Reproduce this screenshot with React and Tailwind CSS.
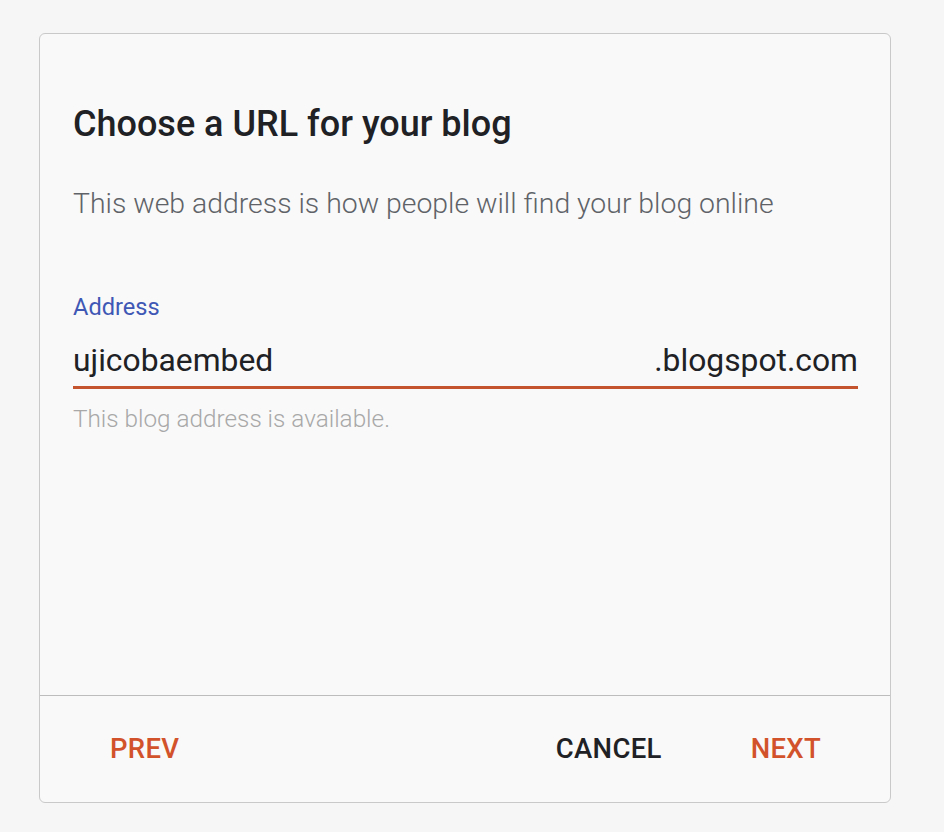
import React from 'react';

// ─── Footer Button ─────────────────────────────────────────────────
const FlatButton = ({ children, tone = 'accent' }) => (
  <button
    type="button"
    className={
      tone === 'accent'
        ? 'text-[27.5px] leading-none font-medium tracking-[0.3px] text-[#d2532b]'
        : 'text-[27.5px] leading-none font-medium tracking-[0.3px] text-[#202124]'
    }
  >
    {children}
  </button>
);

const App = () => {
  return (
    <div
      className="min-h-screen w-[944px] h-[832px] bg-[#f6f6f6] pt-[33px] pl-[39px]"
      style={{ fontFamily: 'Roboto, "Noto Sans", sans-serif' }}
    >
      <div className="w-[852px] h-[770px] bg-[#f9f9f9] border border-[#c9c9c9] rounded-[6px] flex flex-col">
        {/* Body */}
        <div className="flex-1 px-[33px] pt-[70px]">
          <h1 className="text-[36px] leading-[40px] font-medium text-[#202124]">
            Choose a URL for your blog
          </h1>
          <p className="mt-[44px] text-[28.4px] leading-[32px] font-light text-[#5f6368]">
            This web address is how people will find your blog online
          </p>

          <div className="mt-[74px]">
            <label className="block text-[23.6px] leading-[26px] text-[#3f58b5]">Address</label>
            <div className="mt-[22px] flex items-end justify-between border-b-[3px] border-[#c4542d] pb-[8px] mr-[-1px]">
              <span className="text-[31.8px] leading-[36px] text-[#202124]">ujicobaembed</span>
              <span className="text-[31.8px] leading-[36px] text-[#202124]">.blogspot.com</span>
            </div>
            <p className="mt-[17px] text-[24.3px] leading-[26px] font-light text-[#a8a8a8]">
              This blog address is available.
            </p>
          </div>
        </div>

        {/* Footer */}
        <div className="h-[107px] border-t border-[#bdbdbd] flex items-center pl-[70px] pr-[69px]">
          <FlatButton>PREV</FlatButton>
          <div className="flex-1" />
          <FlatButton tone="plain">CANCEL</FlatButton>
          <div className="w-[89px]" />
          <FlatButton>NEXT</FlatButton>
        </div>
      </div>
    </div>
  );
};

export default App;
